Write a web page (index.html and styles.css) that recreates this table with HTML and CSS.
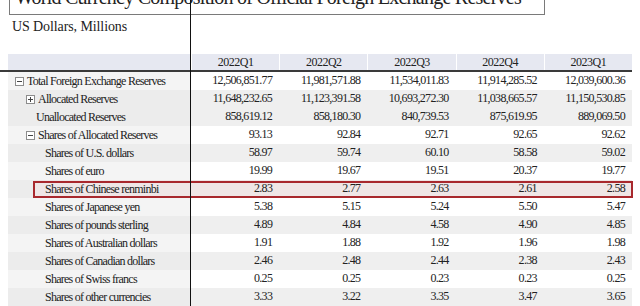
FILE: index.html
```html
<!DOCTYPE html>
<html>
<head>
    <meta charset="UTF-8">
    <title>World Currency Composition of Official Foreign Exchange Reserves</title>
    <link rel="stylesheet" href="styles.css">
</head>
<body>
<div class="page">
    <div class="title">World Currency Composition of Official Foreign Exchange Reserves</div>
    <div class="unit">US Dollars, Millions</div>

    <div class="grid">
        <div class="row head">
            <div class="cell label"></div>
            <div class="cell">2022Q1</div>
            <div class="cell">2022Q2</div>
            <div class="cell">2022Q3</div>
            <div class="cell">2022Q4</div>
            <div class="cell">2023Q1</div>
        </div>

        <div class="row">
            <div class="cell label l0"><span class="tog minus"></span>Total Foreign Exchange Reserves</div>
            <div class="cell num">12,506,851.77</div>
            <div class="cell num">11,981,571.88</div>
            <div class="cell num">11,534,011.83</div>
            <div class="cell num">11,914,285.52</div>
            <div class="cell num">12,039,600.36</div>
        </div>
        <div class="row alt">
            <div class="cell label l1"><span class="tog plus"></span>Allocated Reserves</div>
            <div class="cell num">11,648,232.65</div>
            <div class="cell num">11,123,391.58</div>
            <div class="cell num">10,693,272.30</div>
            <div class="cell num">11,038,665.57</div>
            <div class="cell num">11,150,530.85</div>
        </div>
        <div class="row alt">
            <div class="cell label l1 plain">Unallocated Reserves</div>
            <div class="cell num">858,619.12</div>
            <div class="cell num">858,180.30</div>
            <div class="cell num">840,739.53</div>
            <div class="cell num">875,619.95</div>
            <div class="cell num">889,069.50</div>
        </div>
        <div class="row">
            <div class="cell label l1"><span class="tog minus"></span>Shares of Allocated Reserves</div>
            <div class="cell num">93.13</div>
            <div class="cell num">92.84</div>
            <div class="cell num">92.71</div>
            <div class="cell num">92.65</div>
            <div class="cell num">92.62</div>
        </div>
        <div class="row alt">
            <div class="cell label l2">Shares of U.S. dollars</div>
            <div class="cell num">58.97</div>
            <div class="cell num">59.74</div>
            <div class="cell num">60.10</div>
            <div class="cell num">58.58</div>
            <div class="cell num">59.02</div>
        </div>
        <div class="row">
            <div class="cell label l2">Shares of euro</div>
            <div class="cell num">19.99</div>
            <div class="cell num">19.67</div>
            <div class="cell num">19.51</div>
            <div class="cell num">20.37</div>
            <div class="cell num">19.77</div>
        </div>
        <div class="row alt hl">
            <div class="cell label l2">Shares of Chinese renminbi</div>
            <div class="cell num">2.83</div>
            <div class="cell num">2.77</div>
            <div class="cell num">2.63</div>
            <div class="cell num">2.61</div>
            <div class="cell num">2.58</div>
        </div>
        <div class="row">
            <div class="cell label l2">Shares of Japanese yen</div>
            <div class="cell num">5.38</div>
            <div class="cell num">5.15</div>
            <div class="cell num">5.24</div>
            <div class="cell num">5.50</div>
            <div class="cell num">5.47</div>
        </div>
        <div class="row alt">
            <div class="cell label l2">Shares of pounds sterling</div>
            <div class="cell num">4.89</div>
            <div class="cell num">4.84</div>
            <div class="cell num">4.58</div>
            <div class="cell num">4.90</div>
            <div class="cell num">4.85</div>
        </div>
        <div class="row">
            <div class="cell label l2">Shares of Australian dollars</div>
            <div class="cell num">1.91</div>
            <div class="cell num">1.88</div>
            <div class="cell num">1.92</div>
            <div class="cell num">1.96</div>
            <div class="cell num">1.98</div>
        </div>
        <div class="row alt">
            <div class="cell label l2">Shares of Canadian dollars</div>
            <div class="cell num">2.46</div>
            <div class="cell num">2.48</div>
            <div class="cell num">2.44</div>
            <div class="cell num">2.38</div>
            <div class="cell num">2.43</div>
        </div>
        <div class="row">
            <div class="cell label l2">Shares of Swiss francs</div>
            <div class="cell num">0.25</div>
            <div class="cell num">0.25</div>
            <div class="cell num">0.23</div>
            <div class="cell num">0.23</div>
            <div class="cell num">0.25</div>
        </div>
        <div class="row alt">
            <div class="cell label l2">Shares of other currencies</div>
            <div class="cell num">3.33</div>
            <div class="cell num">3.22</div>
            <div class="cell num">3.35</div>
            <div class="cell num">3.47</div>
            <div class="cell num">3.65</div>
        </div>
    </div>

    <div class="cursor"></div>
</div>
</body>
</html>
```

FILE: styles.css
```css
body {
    margin: 0;
    font-family: "Liberation Serif", "Times New Roman", serif;
    color: #222;
    background-color: #fff;
}
.page {
    position: relative;
    height: 306px;
    overflow: hidden;
}
.title {
    margin: -15px 0 0 9px;
    width: 524px;
    height: 29px;
    padding: 0 5px;
    border: 1px solid #7a7a7a;
    border-top: none;
    font-size: 20px;
    line-height: 24px;
    letter-spacing: -0.75px;
    white-space: nowrap;
    overflow: hidden;
}
.unit {
    margin: 4px 0 0 12px;
    font-size: 14px;
    line-height: 16px;
    letter-spacing: -0.1px;
}
.grid {
    margin: 19px 0 0 8px;
    width: 624px;
}
.row {
    display: grid;
    grid-template-columns: 183px repeat(5, 1fr);
    height: 18px;
    position: relative;
}
.cell {
    font-size: 12px;
    line-height: 17px;
    white-space: nowrap;
    overflow: hidden;
    background-color: #fff;
}
.head {
    height: 16px;
    margin-left: -8px;
    padding-left: 8px;
    border-bottom: 2px solid #3a3a3a;
}
.head .cell {
    background-color: #e6e8f1;
    border-left: 1px solid #fff;
    text-align: center;
    line-height: 16px;
    letter-spacing: -0.5px;
}
.head .label {
    border-left: none;
}
.label {
    background-color: #f4f4f4;
    letter-spacing: -0.75px;
    display: flex;
    align-items: center;
}
.alt .cell {
    background-color: #efefef;
}
.alt .label {
    background-color: #ececec;
}
.num {
    text-align: right;
    padding-right: 7px;
    letter-spacing: -0.7px;
}
.l0 { padding-left: 7px; }
.l1 { padding-left: 18px; }
.l1.plain { padding-left: 28px; }
.l2 { padding-left: 37px; }
.tog {
    display: inline-block;
    position: relative;
    width: 7px;
    height: 7px;
    border: 1px solid #8c8c8c;
    background-color: #fff;
    margin-right: 3px;
    flex: none;
}
.tog::before {
    content: "";
    position: absolute;
    left: 1px;
    top: 3px;
    width: 5px;
    height: 1px;
    background-color: #444;
}
.tog.plus::after {
    content: "";
    position: absolute;
    left: 3px;
    top: 1px;
    width: 1px;
    height: 5px;
    background-color: #444;
}
.hl .cell {
    background-color: #efe6e6;
}
.hl .label {
    background: linear-gradient(to right, #ececec 25px, #efe6e6 25px);
}
.hl::after {
    content: "";
    position: absolute;
    left: 25px;
    right: -1px;
    top: 1px;
    bottom: 0;
    border: 2px solid #a8282d;
}
.cursor {
    position: absolute;
    left: 190px;
    top: 0;
    bottom: 0;
    width: 1px;
    background-color: #111;
}
```
